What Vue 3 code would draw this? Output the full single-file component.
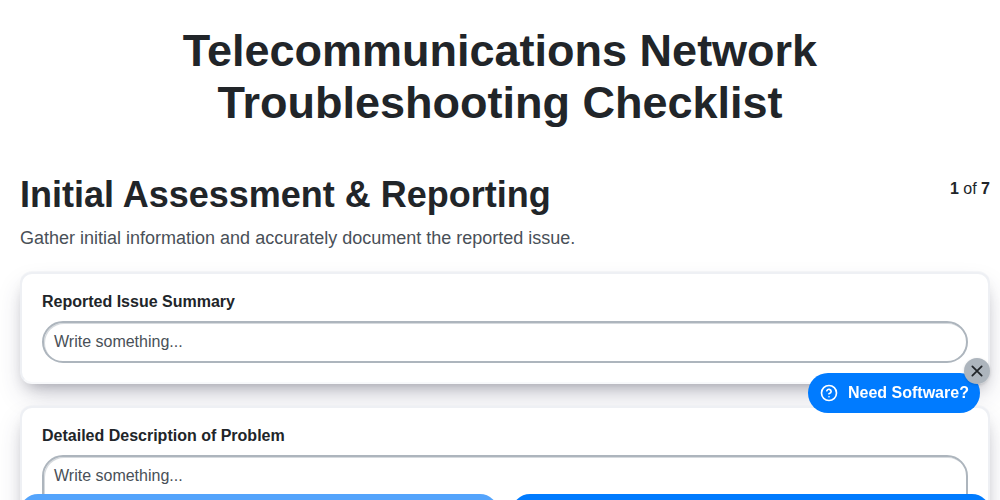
<script setup>
const cards = [
  { label: 'Reported Issue Summary', tall: false },
  { label: 'Detailed Description of Problem', tall: true },
]
</script>

<template>
  <div class="page">
    <h1 class="title">Telecommunications Network Troubleshooting Checklist</h1>
    <div class="content">
      <div class="section-head">
        <h2 class="section-title">Initial Assessment &amp; Reporting</h2>
        <div class="progress"><b>1</b> of <b>7</b></div>
      </div>
      <p class="section-desc">Gather initial information and accurately document the reported issue.</p>
      <div class="cards">
        <div v-for="c in cards" :key="c.label" class="card">
          <div class="label">{{ c.label }}</div>
          <div class="field" :class="{ tall: c.tall }">Write something...</div>
        </div>
      </div>
    </div>
    <div class="actions">
      <div class="action light"></div>
      <div class="action solid"></div>
    </div>
    <div class="promo">
      <svg class="help" viewBox="0 0 24 24" width="18" height="18" fill="none" stroke="#fff" stroke-width="2.2" stroke-linecap="round" stroke-linejoin="round">
        <circle cx="12" cy="12" r="10" />
        <path d="M9.1 9a3 3 0 0 1 5.8 1c0 2-3 3-3 3" />
        <path d="M12 17h.01" />
      </svg>
      <span>Need Software?</span>
      <div class="close">
        <svg viewBox="0 0 24 24" width="14" height="14" fill="none" stroke="#212529" stroke-width="3" stroke-linecap="round">
          <path d="M4 4l16 16M20 4L4 20" />
        </svg>
      </div>
    </div>
  </div>
</template>

<style>
html, body { margin: 0; height: 100%; overflow: hidden; background: #fff; }
</style>

<style scoped>
.page {
  height: 500px;
  overflow: hidden;
  padding: 25px 10px 0;
  box-sizing: border-box;
  font-family: "Liberation Sans", Arial, sans-serif;
  color: #212529;
}
.content {
  padding-left: 10px;
}
.title {
  margin: 0 auto 44px;
  width: 800px;
  text-align: center;
  font-size: 45px;
  line-height: 52px;
  font-weight: 700;
}
.section-head {
  display: flex;
  justify-content: space-between;
  align-items: flex-start;
}
.section-title {
  margin: 0;
  font-size: 36px;
  line-height: 43px;
  font-weight: 700;
}
.progress {
  font-size: 16px;
  line-height: 18px;
  margin-top: 7px;
}
.section-desc {
  margin: 12px 0 24px;
  font-size: 18px;
  line-height: 20px;
  color: #495057;
}
.cards {
  display: flex;
  flex-direction: column;
  gap: 22px;
}
.card {
  background: #fff;
  border: 2px solid #eef0f4;
  border-bottom-color: #f8f9fb;
  border-radius: 12px;
  padding: 19px 20px;
  box-shadow: 0 -1px 0 rgba(238, 240, 244, 0.6), 0 13px 27px -5px rgba(50, 50, 93, 0.25), 0 8px 16px -8px rgba(0, 0, 0, 0.3);
}
.label {
  font-size: 16px;
  font-weight: 700;
  line-height: 18px;
  margin-bottom: 10px;
}
.field {
  height: 42px;
  box-sizing: border-box;
  border: 2px solid #adb5bd;
  border-radius: 21px;
  padding: 10px;
  font-size: 16px;
  line-height: 18px;
  color: #495057;
  background: #fff;
  box-shadow: inset 1px 1px 0 rgba(173, 181, 189, 0.5);
}
.field.tall {
  height: 120px;
}
.actions {
  position: fixed;
  left: 20px;
  right: 10px;
  bottom: -30px;
  display: flex;
  gap: 14px;
}
.action {
  flex: 1;
  height: 36px;
  border-radius: 22px;
}
.action.light { background: #54a4fc; }
.action.solid { background: #007bff; }
.promo {
  position: fixed;
  left: 808px;
  top: 373px;
  width: 172px;
  height: 40px;
  box-sizing: border-box;
  padding-left: 12px;
  display: flex;
  align-items: center;
  gap: 10px;
  background: #007bff;
  border-radius: 20px;
  color: #fff;
  font-size: 16px;
  font-weight: 700;
}
.help { flex: none; }
.close {
  position: absolute;
  left: 156px;
  top: -15px;
  width: 26px;
  height: 26px;
  border-radius: 50%;
  background: #adb5bd;
  display: flex;
  align-items: center;
  justify-content: center;
  box-shadow: 0 1px 3px rgba(0, 0, 0, 0.15);
}
</style>
